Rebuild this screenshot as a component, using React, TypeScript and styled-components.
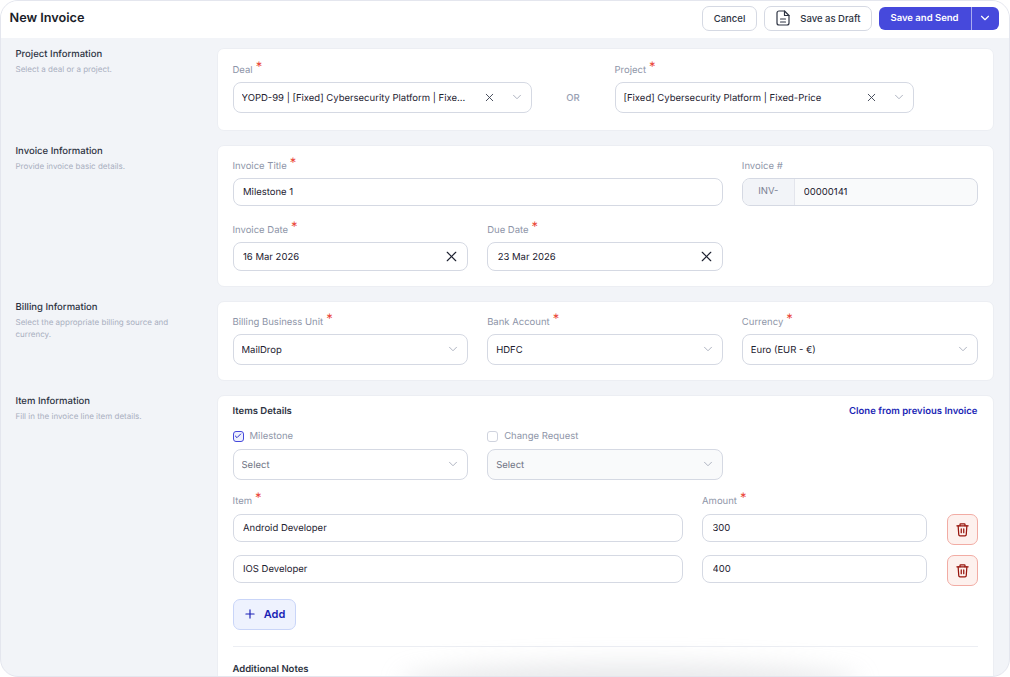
import styled, { createGlobalStyle } from "styled-components";
import { ChevronDown, Plus, X, Check } from "lucide-react";

const Global = createGlobalStyle`
  html, body { margin: 0; padding: 0; background: #fff; }
  * { box-sizing: border-box; }
  body {
    font-family: Inter, "Liberation Sans", sans-serif;
    text-rendering: geometricPrecision;
  }
`;

const Frame = styled.div`
  position: relative;
  width: 1010px;
  height: 677px;
  background: #f2f4f8;
  border: 1.5px solid #e4e6ee;
  border-radius: 18px;
  overflow: hidden;
  display: flex;
  flex-direction: column;
`;

const Header = styled.header`
  flex: none;
  height: 37px;
  background: #fff;
  display: flex;
  align-items: center;
  padding: 0 10.5px 3px 8.5px;
`;

const Title = styled.h1`
  flex: 1;
  margin: 0;
  font-size: 12.7px;
  font-weight: 600;
  color: #1a1d29;
`;

const Button = styled.button<{ $icon?: boolean }>`
  height: 25px;
  padding: ${(p) => (p.$icon ? "0 10px" : "0 11px")};
  margin-left: 7px;
  border: 1px solid #d5d9e3;
  border-radius: 7px;
  background: #fff;
  color: #2d3342;
  font: 500 9.5px Inter, sans-serif;
  display: flex;
  align-items: center;
  gap: 9px;
`;

const SplitButton = styled.div`
  display: flex;
  margin-left: 7px;
  height: 23px;
  border-radius: 6px;
  overflow: hidden;
  background: #4649dc;
  color: #fff;
  font: 600 9.5px Inter, sans-serif;
`;

const SplitMain = styled.div`
  width: 93px;
  display: flex;
  align-items: center;
  justify-content: center;
  border-right: 1px solid #a9abf0;
`;

const SplitCaret = styled.div`
  width: 27px;
  display: flex;
  align-items: center;
  justify-content: center;
`;

const Body = styled.main`
  flex: 1;
  min-height: 0;
  padding: 9.5px 15.5px 0 14.5px;
  display: flex;
  flex-direction: column;
  gap: 14px;
`;

const Section = styled.section`
  display: flex;
`;

const Intro = styled.div`
  flex: none;
  width: 201px;
  padding-top: 2px;
`;

const IntroTitle = styled.div`
  font-size: 9.5px;
  font-weight: 500;
  color: #2d3342;
  line-height: 10px;
`;

const IntroText = styled.div`
  margin-top: 3px;
  width: 160px;
  font-size: 8px;
  color: #a9afbf;
  line-height: 12px;
`;

const Card = styled.div<{ $pad?: string }>`
  flex: 1;
  background: #fff;
  border: 1px solid #eceef3;
  border-radius: 7px;
  padding: ${(p) => p.$pad || "9px 15px 15px"};
`;

const Row = styled.div<{ $top?: number }>`
  display: grid;
  grid-template-columns: repeat(3, 1fr);
  column-gap: 19px;
  margin-top: ${(p) => p.$top || 0}px;
`;

const DealRow = styled.div`
  display: flex;
  width: 681px;
  align-items: flex-end;
`;

const OrText = styled.div`
  width: 83px;
  height: 31px;
  padding-top: 3px;
  display: flex;
  align-items: center;
  justify-content: center;
  font-size: 9.5px;
  font-weight: 500;
  color: #98a0b3;
`;

const Field = styled.div<{ $span?: number; $grow?: boolean }>`
  grid-column: span ${(p) => p.$span || 1};
  flex: ${(p) => (p.$grow ? 1 : "none")};
  min-width: 0;
`;

const Label = styled.label`
  display: flex;
  height: 18px;
  margin-bottom: 5px;
  font-size: 9.5px;
  color: #8e95a8;
  align-items: flex-end;
  line-height: 12px;
`;

const Star = styled.span`
  margin-left: 3px;
  margin-top: 2px;
  align-self: flex-start;
  color: #ea4335;
  font-size: 13px;
  line-height: 13px;
`;

const Box = styled.div<{ $h?: number; $disabled?: boolean; $top?: number }>`
  height: ${(p) => p.$h || 31}px;
  margin-top: ${(p) => p.$top || 0}px;
  border: 1px solid #d5d9e3;
  border-radius: 8px;
  background: ${(p) => (p.$disabled ? "#f9fafb" : "#fff")};
  display: flex;
  align-items: center;
  padding: 0 7px 0 8px;
  font-size: 9.5px;
  color: #1d2130;
  overflow: hidden;
`;

const Value = styled.span<{ $muted?: boolean }>`
  flex: 1;
  min-width: 0;
  padding-top: 2px;
  white-space: nowrap;
  overflow: hidden;
  color: ${(p) => (p.$muted ? "#6f7484" : "#1d2130")};
`;

const Input = styled(Box)`
  padding-left: 9.5px;
`;

const Prefix = styled.div`
  flex: none;
  width: 52px;
  height: 100%;
  margin-left: -9.5px;
  margin-right: 9px;
  background: #f2f4f8;
  border-right: 1px solid #e3e5ec;
  display: flex;
  align-items: center;
  justify-content: center;
  color: #7d8394;
`;

const ClearIcon = styled(X)`
  flex: none;
  width: 13px;
  height: 13px;
  color: #3c4252;
  margin-right: 13.5px;
  stroke-width: 1.7;
`;

const DateClear = styled(X)`
  flex: none;
  width: 17px;
  height: 17px;
  color: #1d2130;
  stroke-width: 1.6;
`;

const Caret = styled(ChevronDown)`
  flex: none;
  width: 14px;
  height: 14px;
  color: #a3a9b8;
  stroke-width: 1.5;
`;

const HeadRow = styled.div`
  display: flex;
  justify-content: space-between;
  align-items: center;
  height: 30px;
  padding-top: 1px;
`;

const SubHead = styled.div`
  font-size: 9.5px;
  font-weight: 600;
  color: #2d3342;
`;

const LinkText = styled.a`
  font-size: 9.5px;
  font-weight: 600;
  color: #1a1fb5;
`;

const CheckLine = styled.div`
  height: 20px;
  padding-top: 1px;
  display: flex;
  align-items: center;
  gap: 6px;
  font-size: 9.5px;
  color: #8e95a8;
`;

const CheckBox = styled.span<{ $on?: boolean }>`
  width: 11px;
  height: 11px;
  border-radius: 3px;
  border: 1px solid ${(p) => (p.$on ? "#4649dc" : "#cfd3de")};
  background: ${(p) => (p.$on ? "#eef0fd" : "#fff")};
  display: flex;
  align-items: center;
  justify-content: center;
  color: #2a2ec8;
`;

const ItemGrid = styled.div`
  display: grid;
  grid-template-columns: 450px 225px 31px;
  justify-content: space-between;
  row-gap: 10px;
  align-items: start;
`;

const ItemHead = styled(ItemGrid)`
  margin: 10px 0 1px;
`;

const TrashButton = styled.button`
  width: 31px;
  height: 31px;
  padding: 0;
  border: 1px solid #f2aca4;
  border-radius: 7px;
  background: #fdf1ee;
  color: #97140c;
  display: flex;
  align-items: center;
  justify-content: center;
`;

const AddButton = styled.button`
  margin-top: 13px;
  width: 63px;
  height: 31px;
  padding: 0;
  border: 1px solid #c9d5f8;
  border-radius: 7px;
  background: #eef2fe;
  color: #1a1fb5;
  display: flex;
  align-items: center;
  justify-content: center;
  gap: 7px;
  font: 600 11px Inter, sans-serif;
`;

const Divider = styled.hr`
  margin: 16px 0 17px;
  border: 0;
  border-top: 1px solid #eceef3;
`;

const BottomGlow = styled.div`
  position: absolute;
  left: 400px;
  right: 150px;
  bottom: -24px;
  height: 36px;
  background: rgba(190, 192, 198, 0.35);
  filter: blur(12px);
  border-radius: 50%;
  pointer-events: none;
`;

const DraftIcon = () => (
  <svg width="16" height="16" viewBox="0 0 16 16" fill="none" stroke="#2d3342" strokeWidth="1.2" strokeLinecap="round" strokeLinejoin="round">
    <path d="M9.5 1H4a2 2 0 0 0-2 2v10a2 2 0 0 0 2 2h8a2 2 0 0 0 2-2V5.5z" />
    <path d="M9.5 1v4.5H14" />
    <path d="M5.5 9h5M5.5 12h5" />
  </svg>
);

const TrashIcon = () => (
  <svg width="15" height="15" viewBox="0 0 24 24" fill="none" stroke="currentColor" strokeWidth="2" strokeLinecap="round" strokeLinejoin="round">
    <path d="M3 6h18" />
    <path d="M8 6V4a1 1 0 0 1 1-1h6a1 1 0 0 1 1 1v2" />
    <path d="M5 6l1 14a2 2 0 0 0 2 2h8a2 2 0 0 0 2-2l1-14" />
    <path d="M10 11v6M14 11v6" />
  </svg>
);

const items = [
  { name: "Android Developer", amount: "300" },
  { name: "IOS Developer", amount: "400" },
];

function ItemLine({ name, amount }: { name: string; amount: string }) {
  return (
    <>
      <Input $h={28}><Value>{name}</Value></Input>
      <Input $h={28}><Value>{amount}</Value></Input>
      <TrashButton><TrashIcon /></TrashButton>
    </>
  );
}

export default function App() {
  return (
    <Frame>
      <Global />
      <Header>
        <Title>New Invoice</Title>
        <Button>Cancel</Button>
        <Button $icon><DraftIcon />Save as Draft</Button>
        <SplitButton>
          <SplitMain>Save and Send</SplitMain>
          <SplitCaret><ChevronDown size={14} /></SplitCaret>
        </SplitButton>
      </Header>
      <Body>
        <Section>
          <Intro>
            <IntroTitle>Project Information</IntroTitle>
            <IntroText>Select a deal or a project.</IntroText>
          </Intro>
          <Card $pad="10px 15px 17px">
            <DealRow>
              <Field $grow>
                <Label>Deal<Star>*</Star></Label>
                <Box>
                  <Value>YOPD-99 | [Fixed] Cybersecurity Platform | Fixe...</Value>
                  <ClearIcon />
                  <Caret />
                </Box>
              </Field>
              <OrText>OR</OrText>
              <Field $grow>
                <Label>Project<Star>*</Star></Label>
                <Box>
                  <Value>[Fixed] Cybersecurity Platform | Fixed-Price</Value>
                  <ClearIcon />
                  <Caret />
                </Box>
              </Field>
            </DealRow>
          </Card>
        </Section>

        <Section>
          <Intro>
            <IntroTitle>Invoice Information</IntroTitle>
            <IntroText>Provide invoice basic details.</IntroText>
          </Intro>
          <Card>
            <Row>
              <Field $span={2}>
                <Label>Invoice Title<Star>*</Star></Label>
                <Input $h={28}><Value>Milestone 1</Value></Input>
              </Field>
              <Field>
                <Label>Invoice #</Label>
                <Input $h={28} $disabled>
                  <Prefix>INV-</Prefix>
                  <Value>00000141</Value>
                </Input>
              </Field>
            </Row>
            <Row $top={13}>
              <Field>
                <Label>Invoice Date<Star>*</Star></Label>
                <Input $h={29}><Value>16 Mar 2026</Value><DateClear /></Input>
              </Field>
              <Field>
                <Label>Due Date<Star>*</Star></Label>
                <Input $h={29}><Value>23 Mar 2026</Value><DateClear /></Input>
              </Field>
            </Row>
          </Card>
        </Section>

        <Section>
          <Intro>
            <IntroTitle>Billing Information</IntroTitle>
            <IntroText>Select the appropriate billing source and currency.</IntroText>
          </Intro>
          <Card>
            <Row>
              <Field>
                <Label>Billing Business Unit<Star>*</Star></Label>
                <Box><Value>MailDrop</Value><Caret /></Box>
              </Field>
              <Field>
                <Label>Bank Account<Star>*</Star></Label>
                <Box><Value>HDFC</Value><Caret /></Box>
              </Field>
              <Field>
                <Label>Currency<Star>*</Star></Label>
                <Box><Value>Euro (EUR - €)</Value><Caret /></Box>
              </Field>
            </Row>
          </Card>
        </Section>

        <Section>
          <Intro>
            <IntroTitle>Item Information</IntroTitle>
            <IntroText>Fill in the invoice line item details.</IntroText>
          </Intro>
          <Card $pad="0 15px 40px">
            <HeadRow>
              <SubHead>Items Details</SubHead>
              <LinkText>Clone from previous Invoice</LinkText>
            </HeadRow>
            <Row>
              <Field>
                <CheckLine>
                  <CheckBox $on><Check size={8} strokeWidth={3} /></CheckBox>
                  Milestone
                </CheckLine>
                <Box $top={3}><Value $muted>Select</Value><Caret /></Box>
              </Field>
              <Field>
                <CheckLine>
                  <CheckBox />
                  Change Request
                </CheckLine>
                <Box $top={3} $disabled><Value $muted>Select</Value><Caret /></Box>
              </Field>
            </Row>
            <ItemHead>
              <Field>
                <Label>Item<Star>*</Star></Label>
              </Field>
              <Field>
                <Label>Amount<Star>*</Star></Label>
              </Field>
            </ItemHead>
            <ItemGrid>
              {items.map((item) => (
                <ItemLine key={item.name} name={item.name} amount={item.amount} />
              ))}
            </ItemGrid>
            <AddButton><Plus size={14} />Add</AddButton>
            <Divider />
            <SubHead>Additional Notes</SubHead>
          </Card>
        </Section>
      </Body>
      <BottomGlow />
    </Frame>
  );
}
